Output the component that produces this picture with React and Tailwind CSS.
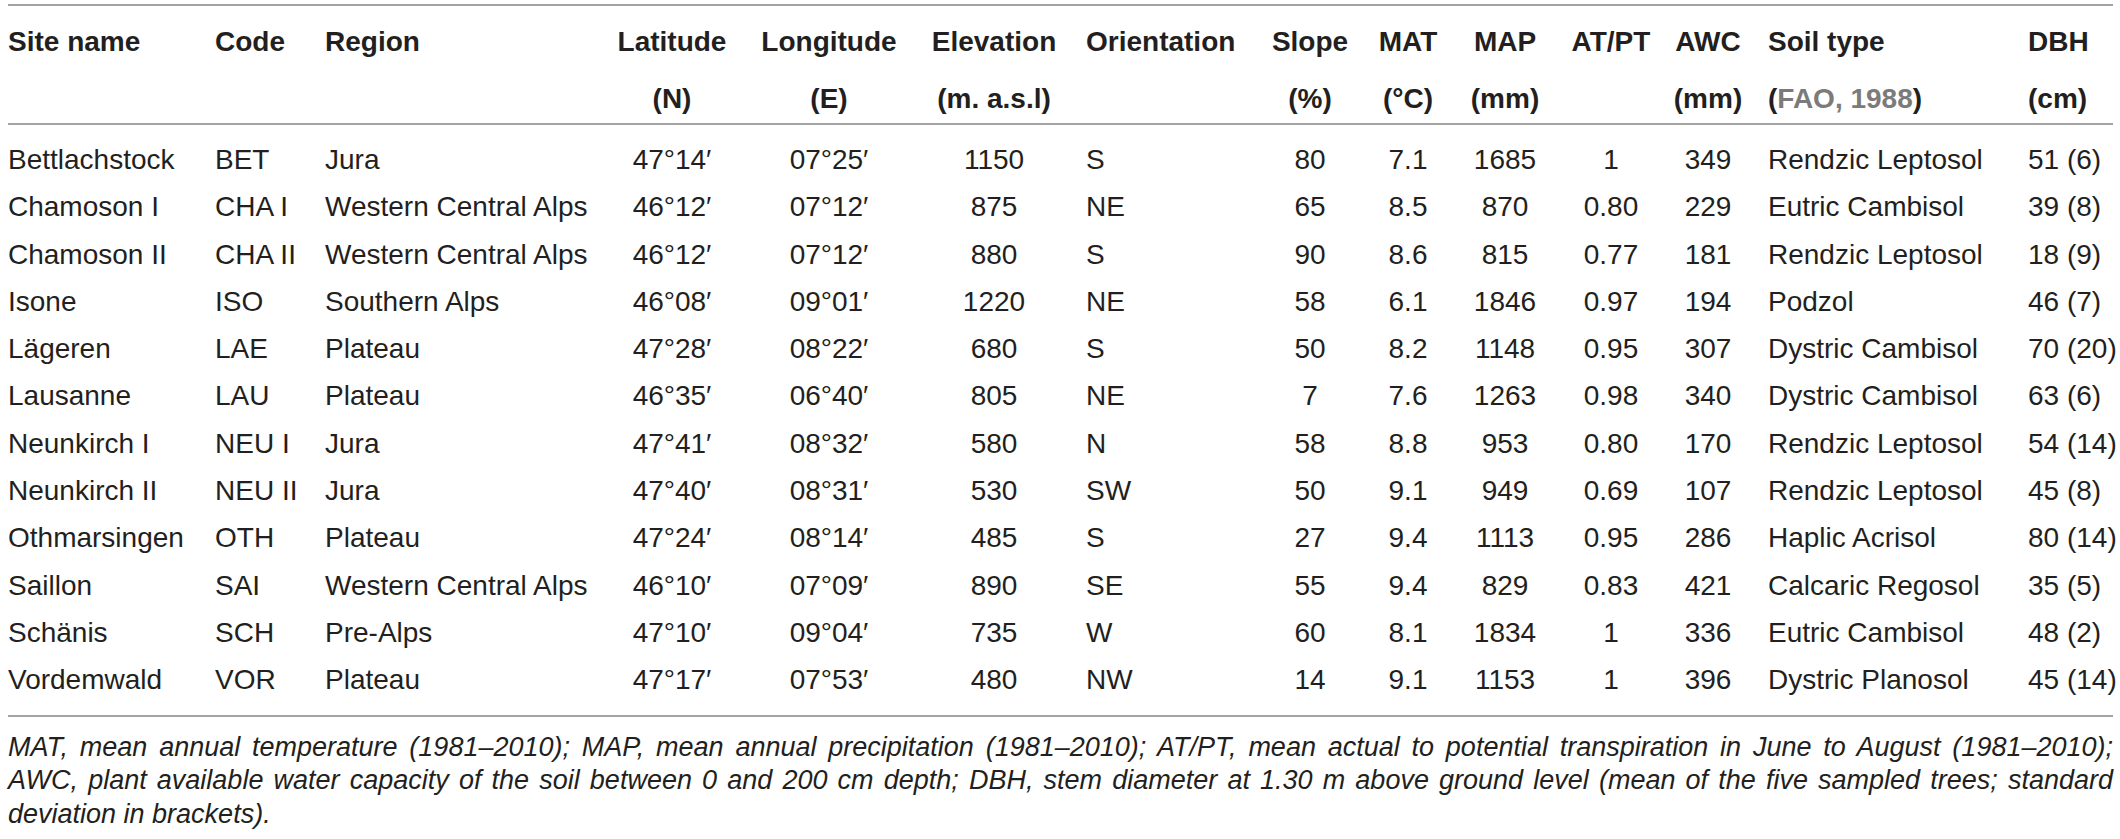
const rows = [
    ["Bettlachstock", "BET", "Jura", "47°14′", "07°25′", "1150", "S", "80", "7.1", "1685", "1", "349", "Rendzic Leptosol", "51 (6)"],
    ["Chamoson I", "CHA I", "Western Central Alps", "46°12′", "07°12′", "875", "NE", "65", "8.5", "870", "0.80", "229", "Eutric Cambisol", "39 (8)"],
    ["Chamoson II", "CHA II", "Western Central Alps", "46°12′", "07°12′", "880", "S", "90", "8.6", "815", "0.77", "181", "Rendzic Leptosol", "18 (9)"],
    ["Isone", "ISO", "Southern Alps", "46°08′", "09°01′", "1220", "NE", "58", "6.1", "1846", "0.97", "194", "Podzol", "46 (7)"],
    ["Lägeren", "LAE", "Plateau", "47°28′", "08°22′", "680", "S", "50", "8.2", "1148", "0.95", "307", "Dystric Cambisol", "70 (20)"],
    ["Lausanne", "LAU", "Plateau", "46°35′", "06°40′", "805", "NE", "7", "7.6", "1263", "0.98", "340", "Dystric Cambisol", "63 (6)"],
    ["Neunkirch I", "NEU I", "Jura", "47°41′", "08°32′", "580", "N", "58", "8.8", "953", "0.80", "170", "Rendzic Leptosol", "54 (14)"],
    ["Neunkirch II", "NEU II", "Jura", "47°40′", "08°31′", "530", "SW", "50", "9.1", "949", "0.69", "107", "Rendzic Leptosol", "45 (8)"],
    ["Othmarsingen", "OTH", "Plateau", "47°24′", "08°14′", "485", "S", "27", "9.4", "1113", "0.95", "286", "Haplic Acrisol", "80 (14)"],
    ["Saillon", "SAI", "Western Central Alps", "46°10′", "07°09′", "890", "SE", "55", "9.4", "829", "0.83", "421", "Calcaric Regosol", "35 (5)"],
    ["Schänis", "SCH", "Pre-Alps", "47°10′", "09°04′", "735", "W", "60", "8.1", "1834", "1", "336", "Eutric Cambisol", "48 (2)"],
    ["Vordemwald", "VOR", "Plateau", "47°17′", "07°53′", "480", "NW", "14", "9.1", "1153", "1", "396", "Dystric Planosol", "45 (14)"],
]

// column alignment, same order as the grid template
const align = [
    "text-left",
    "text-left",
    "text-left",
    "text-center",
    "text-center",
    "text-center",
    "text-left pl-[27px]",
    "text-center",
    "text-center",
    "text-center",
    "text-center",
    "text-center",
    "text-left pl-[19px]",
    "text-left",
]

const headers = [
    ["Site name", ""],
    ["Code", ""],
    ["Region", ""],
    ["Latitude", "(N)"],
    ["Longitude", "(E)"],
    ["Elevation", "(m. a.s.l)"],
    ["Orientation", ""],
    ["Slope", "(%)"],
    ["MAT", "(°C)"],
    ["MAP", "(mm)"],
    ["AT/PT", ""],
    ["AWC", "(mm)"],
    ["Soil type", "fao"],
    ["DBH", "(cm)"],
]

const grid = "grid grid-cols-[207px_110px_290px_114px_200px_130px_200px_102px_94px_100px_112px_82px_279px_85px]"

const App = () => {
    return (
        <div className="w-[2120px] h-[839px] bg-white overflow-hidden text-[#231f20] font-['Liberation_Sans',Arial,sans-serif] text-[28px]">
            <div className="w-[2105px] ml-2 pt-1">
                <div className="h-[2px] bg-[#a3a3a3]"></div>

                <div className={`${grid} font-bold pt-4 pb-1`}>
                    {headers.map(([top, bottom], i) => (
                        <div key={i} className={`${align[i]} whitespace-nowrap flex flex-col gap-[17px]`}>
                            <span className="leading-[40px]">{top}</span>
                            <span className="leading-[40px]">
                                {bottom === "fao" ? (
                                    <>
                                        (<span className="text-[#7b7b7b]">FAO, 1988</span>)
                                    </>
                                ) : (
                                    bottom || "\u00a0"
                                )}
                            </span>
                        </div>
                    ))}
                </div>

                <div className="h-[2px] bg-[#a3a3a3]"></div>

                <div className="py-[11px]">
                    {rows.map((row, r) => (
                        <div key={r} className={`${grid} leading-[47.3px]`}>
                            {row.map((cell, i) => (
                                <div key={i} className={`${align[i]} whitespace-nowrap`}>
                                    {cell}
                                </div>
                            ))}
                        </div>
                    ))}
                </div>

                <div className="h-[2px] bg-[#a3a3a3]"></div>

                <div className="pt-[14px] italic leading-[33.5px] text-[27px]">
                    <div className="whitespace-nowrap text-justify [text-align-last:justify]">
                        MAT, mean annual temperature (1981–2010); MAP, mean annual precipitation (1981–2010); AT/PT, mean actual to potential transpiration in June to August (1981–2010);
                    </div>
                    <div className="whitespace-nowrap text-justify [text-align-last:justify]">
                        AWC, plant available water capacity of the soil between 0 and 200 cm depth; DBH, stem diameter at 1.30 m above ground level (mean of the five sampled trees; standard
                    </div>
                    <div className="whitespace-nowrap">deviation in brackets).</div>
                </div>
            </div>
        </div>
    )
}

export default App
